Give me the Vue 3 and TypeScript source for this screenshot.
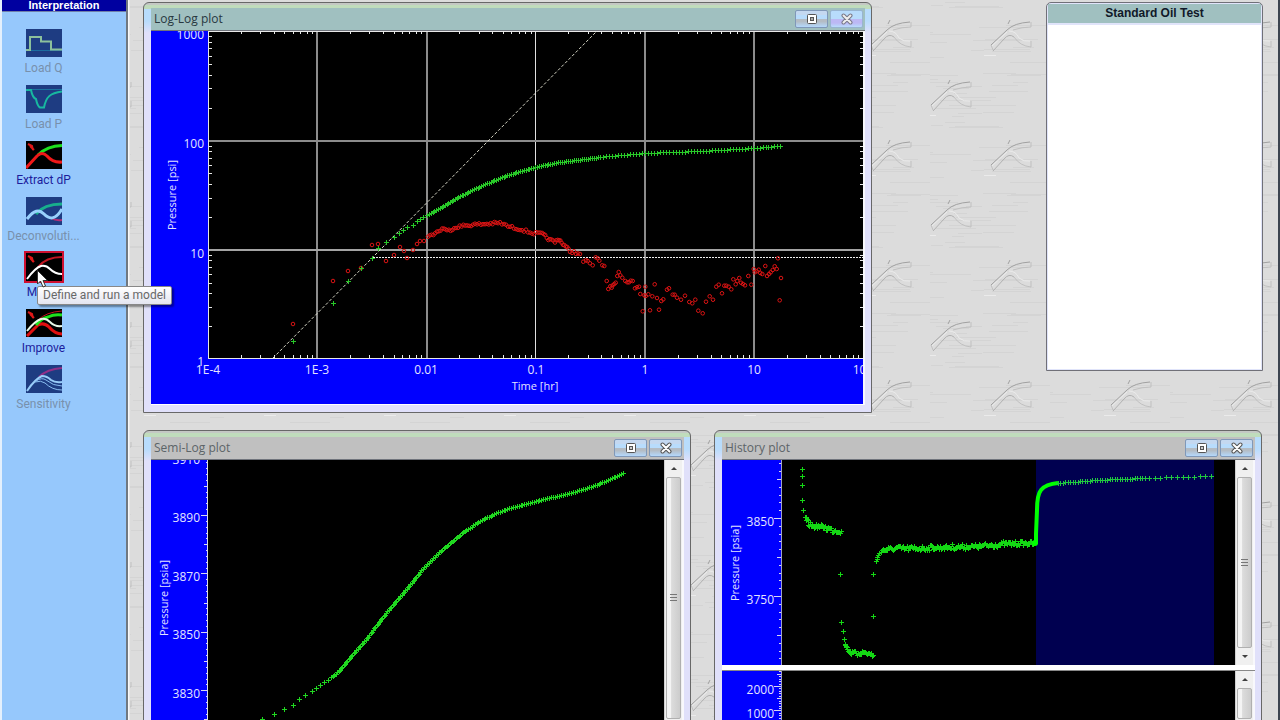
<script setup lang="ts">
type Pt = [number, number]

interface Tool {
  id: string
  label: string
  enabled: boolean
  active?: boolean
}

const tools: Tool[] = [
  { id: 'q', label: 'Load Q', enabled: false },
  { id: 'p', label: 'Load P', enabled: false },
  { id: 'dp', label: 'Extract dP', enabled: true },
  { id: 'dec', label: 'Deconvoluti...', enabled: false },
  { id: 'model', label: 'Model', enabled: true, active: true },
  { id: 'imp', label: 'Improve', enabled: true },
  { id: 'sens', label: 'Sensitivity', enabled: false },
]

let seed = 7
function rnd(): number {
  seed = (seed * 16807) % 2147483647
  return seed / 2147483647
}

/* Samples a polyline every `step` pixels, with optional vertical noise. */
function sample(line: Pt[], step: number, noise = 0): Pt[] {
  const out: Pt[] = []
  for (let i = 0; i < line.length - 1; i++) {
    const [x0, y0] = line[i]
    const [x1, y1] = line[i + 1]
    const n = Math.max(1, Math.round(Math.hypot(x1 - x0, y1 - y0) / step))
    for (let k = 0; k < n; k++) {
      const t = k / n
      out.push([x0 + (x1 - x0) * t, y0 + (y1 - y0) * t + (rnd() - 0.5) * 2 * noise])
    }
  }
  out.push(line[line.length - 1])
  return out
}

function plus(pts: Pt[]): string {
  return pts
    .map(([x, y]) => {
      const a = Math.round(x)
      const b = Math.round(y)
      return `M${a - 2} ${b + 0.5}h5M${a + 0.5} ${b - 2}v5`
    })
    .join('')
}

function rings(pts: Pt[]): string {
  return pts
    .map(([x, y]) => `M${(x - 1.8).toFixed(1)} ${y.toFixed(1)}a1.8 1.8 0 1 0 3.6 0a1.8 1.8 0 1 0 -3.6 0`)
    .join('')
}

/* ---- log-log plot ---- */
const decade = 109.2
const left = 57
const plotRight = 712
const bottom = 327

const gridX = [
  { x: 165, w: 2, c: '#8c8c8c' },
  { x: 275, w: 2, c: '#8c8c8c' },
  { x: 384, w: 1, c: '#e0e0e0' },
  { x: 493, w: 2, c: '#8c8c8c' },
  { x: 602, w: 2, c: '#8c8c8c' },
]
const gridY = [
  { y: 109, c: '#8c8c8c' },
  { y: 218, c: '#a4a4a4' },
]

function logTicks(): string {
  let d = ''
  for (let k = 0; k < 6; k++) {
    for (let m = 2; m < 10; m++) {
      const x = Math.round(left + (k + Math.log10(m)) * decade) + 0.5
      d += `M${x} 0v3M${x} ${bottom}v-3`
    }
  }
  for (let k = 0; k < 3; k++) {
    for (let m = 2; m < 10; m++) {
      const y = Math.round(bottom + 1 - (k + Math.log10(m)) * decade) + 0.5
      d += `M${left} ${y}h4M${plotRight} ${y}h-3`
    }
  }
  return d
}
const ticks = logTicks()

const greenEarly: Pt[] = [
  [142, 310], [182, 272], [197, 250], [210, 237], [221, 227], [227, 217], [235, 211], [243, 206],
  [248, 202], [252, 199], [256, 196], [262, 194], [266, 190], [269, 188], [272, 186],
]
const greenLate = [
  ...sample(
    [
      [276, 184], [289, 177], [304, 168], [319, 160], [334, 153], [349, 147], [369, 140], [384, 136],
      [409, 131], [449, 126],
    ],
    2,
  ),
  ...sample([[449, 126], [494, 122], [549, 120], [603, 117], [629, 115]], 3),
]
const logGreen = plus([...greenEarly, ...greenLate])

const redEarly: Pt[] = [
  [142, 293], [182, 250], [197, 240], [210, 237], [221, 214], [227, 213], [235, 230], [243, 224],
  [249, 216], [253, 220], [256, 227], [262, 219], [266, 213], [269, 210], [273, 210],
]
const redMid = sample(
  [
    [277, 206], [286, 201], [293, 197], [296, 200], [305, 196], [318, 194], [334, 193], [349, 192],
    [359, 196], [369, 198], [381, 202], [391, 203], [399, 209], [404, 211], [408, 208], [412, 213],
    [419, 220], [429, 223],
  ],
  2,
  1.4,
)
const redTail = (
  [
    [250, 185], [258, 181], [263, 183], [270, 190], [278, 196], [287, 172], [293, 175], [298, 182],
    [307, 196], [313, 198], [320, 243], [325, 267], [331, 259], [335, 263], [338, 256], [343, 252],
    [347, 248], [352, 228], [356, 216], [361, 226], [367, 233], [376, 243], [382, 247], [387, 247],
    [392, 242], [398, 243], [405, 265], [411, 262], [417, 260], [421, 282], [428, 334], [436, 260],
    [433, 286], [437, 288], [445, 283], [450, 331], [457, 289], [464, 253], [471, 294], [477, 329],
    [484, 303], [490, 298], [501, 269], [507, 265], [518, 284], [524, 284], [531, 293], [543, 299],
    [555, 287], [568, 306], [577, 310], [586, 299], [595, 332], [608, 340], [618, 305], [629, 289],
    [639, 299], [649, 260], [656, 254], [666, 280], [673, 257], [679, 257], [686, 260], [694, 268],
    [700, 238], [707, 253], [712, 243], [718, 234], [723, 248], [729, 252], [735, 256], [745, 228],
    [754, 254], [761, 207], [764, 217], [770, 214], [776, 209], [781, 219], [787, 222], [796, 198],
    [801, 228], [807, 222], [812, 217], [818, 210], [824, 199], [830, 207], [834, 175], [843, 234],
    [839, 301],
  ] as Pt[]
).map(([x, y]): Pt => [349 + x / 3, 169 + y / 3])
const logRed = rings([...redEarly, ...redMid, ...redTail])

const xLabels = ['1E-4', '1E-3', '0.01', '0.1', '1', '10', '100'].map((t, i) => ({
  t,
  x: Math.round(left + i * decade),
}))
const yLabels = [
  { t: '1000', y: 8 },
  { t: '100', y: 117 },
  { t: '10', y: 227 },
  { t: '1', y: 335 },
]

/* ---- linear axes ---- */
function linearTicks(x: number, first: number, minor: number, height: number, half: number): string {
  let d = ''
  for (let i = -20; i < 60; i++) {
    const y = Math.round(first + i * minor)
    if (y < 0 || y > height) continue
    const len = i % (half * 2) === 0 ? 7 : i % half === 0 ? 4 : 2
    d += `M${x} ${y + 0.5}h${-len}`
  }
  return d
}
const semiTicks = linearTicks(57, 55, 5.84, 260, 5)
const histTicks = linearTicks(59, 58, 7.8, 205, 5)
const rateTicks = linearTicks(59, 15, 2.44, 70, 5)

const semiLabels = [3910, 3890, 3870, 3850, 3830].map((v, i) => ({ v, y: Math.round(4 + i * 58.4) }))

const semiGreen = plus([
  ...([
    [111, 259], [123, 254], [133, 249], [142, 245], [148, 239], [154, 235], [161, 231], [165, 228],
    [169, 225], [173, 222], [177, 220],
  ] as Pt[]),
  ...sample(
    [
      [180, 217], [189, 210], [200, 196], [212, 183], [222, 170], [235, 153], [252, 133], [269, 112],
      [279, 101], [290, 91], [300, 82], [312, 72], [329, 61], [345, 53], [362, 47], [379, 43],
      [396, 38], [412, 35], [426, 31], [442, 26], [455, 21], [472, 13],
    ],
    2,
  ),
])

const histGreen = plus([
  ...([
    [80, 9], [80, 16], [80, 25], [80, 40], [81, 50], [118, 114], [119, 162], [121, 171], [122, 179],
    [151, 156], [151, 114],
  ] as Pt[]),
  ...sample([[83, 58], [87, 64], [91, 66], [98, 66], [105, 68], [111, 70], [119, 71]], 1, 2.5),
  ...sample([[123, 184], [126, 190], [130, 193], [135, 193], [142, 192], [151, 195]], 1, 2.5),
  ...sample([[154, 101], [156, 95], [160, 90]], 2, 0),
  ...sample([[160, 90], [167, 89], [175, 88], [195, 88], [221, 87], [254, 86], [278, 84], [295, 83], [312, 83]], 1, 2.5),
])
const histJump = 'M314 84V74L315 50Q315 35 319 30Q324 24 336 23'
const histFlat = plus([
  ...sample([[336, 23], [375, 20], [423, 18]], 2.5),
  ...sample([[427, 18], [455, 17], [489, 16]], 5.6),
])

/* ---- brushed metal strokes of the desktop tile ---- */
const streaks = Array.from({ length: 44 }, () => {
  const y = Math.floor(rnd() * 120) + 0.5
  return `M${Math.floor(rnd() * 110) - 20} ${y}h${Math.floor(rnd() * 40) + 12}`
}).join('')
</script>

<template>
  <div class="app">
    <aside class="side">
      <h2 class="side-title">Interpretation</h2>
      <nav class="tools">
        <button
          v-for="t in tools"
          :key="t.id"
          type="button"
          class="tool"
          :class="{ active: t.active }"
          :disabled="!t.enabled"
        >
          <svg class="tool-icon" viewBox="0 0 36 28" fill="none" stroke-width="2">
            <rect width="36" height="28" :fill="t.enabled ? '#000' : '#1e3c82'" />
            <template v-if="t.id === 'q'">
              <path d="M0 21.500H36" stroke="#1c6ca0" stroke-width="1" />
              <path d="M0 21H4V8H15V12.500H25V20.500H36" stroke="#8cc09c" />
            </template>
            <template v-else-if="t.id === 'p'">
              <path d="M0 4.500H36" stroke="#1c74a0" stroke-width="1" />
              <path d="M0 5H5C6 10 7 13 10 14C11 19 13 22 14 22.500H18C20 12 24 8 36 6.500" stroke="#18b8a0" />
            </template>
            <template v-else-if="t.id === 'dp'">
              <path d="M12 14Q21 5 36 4.500" stroke="#1ee01e" stroke-width="3" />
              <path d="M0 27L11 15Q16 10 21 15Q27 22 36 21" stroke="#f01818" stroke-width="3" />
            </template>
            <template v-else-if="t.id === 'dec'">
              <path d="M10 17Q18 7 36 7" stroke="#18b08c" stroke-width="3" />
              <path d="M25 21Q30 24 36 23" stroke="#b03078" />
              <path d="M1 22C8 13 13 12 18 17S29 24 36 12" stroke="#98d0fc" stroke-width="3" />
            </template>
            <template v-else-if="t.id === 'model'">
              <path d="M12 14Q20 4 36 4" stroke="#c01420" />
              <path d="M1 26Q9 15 15 13Q20 12 24 16Q29 21 36 21" stroke="#fff" />
            </template>
            <template v-else-if="t.id === 'imp'">
              <path d="M1 27L12 16Q18 13 23 18Q29 25 36 25" stroke="#e01010" stroke-width="3" />
              <path d="M10 16Q16 9 22 8Q28 5 36 6" stroke="#1ee01e" stroke-width="3" />
              <path d="M12 11Q20 3 36 2" stroke="#c01420" stroke-width="1" />
              <path d="M1 22Q9 12 15 10Q20 9 24 13Q29 18 36 17" stroke="#e8f8e8" />
            </template>
            <template v-else>
              <path d="M13 12Q21 4 36 3" stroke="#903088" />
              <path d="M1 26Q9 14 16 11Q21 11 25 15Q29 18 36 17" stroke="#98ccf8" />
              <path d="M10 16Q16 12 20 15Q27 21 36 21M9 17Q15 15 19 18Q26 25 36 25" stroke="#88bcf0" stroke-width="1" />
            </template>
            <path v-if="t.enabled" d="M2 3L6 5L7 9M4 5L8 9" stroke="#e01818" />
          </svg>
          <span class="tool-label">{{ t.label }}</span>
        </button>
      </nav>
    </aside>

    <main class="desktop">
      <svg class="texture" aria-hidden="true">
        <defs>
          <pattern id="metal" x="-40" y="-41" width="120" height="120" patternUnits="userSpaceOnUse">
            <rect width="120" height="120" fill="#dcdcdc" />
            <path :d="streaks" stroke="#d4d4d4" fill="none" />
            <g v-for="o in [0, 60]" :key="o" :transform="`translate(${o} ${o})`" fill="none">
              <path d="M20 1L18 5M1 26L17 11Q24 4 40 3" stroke="#a0a0a0" />
              <path d="M3 32L14 20Q19 14 24 18" stroke="#b0b0b0" />
              <path d="M41 3V8Q32 8 23 11M24 18Q30 27 41 28V22M1 26L3 31" stroke="#c0c0c0" />
              <path d="M19 12Q26 12 29 19Q34 23 40 22M2 27L17 13M-6 36.500H6" stroke="#ebebeb" />
            </g>
          </pattern>
        </defs>
        <rect width="100%" height="100%" fill="url(#metal)" />
      </svg>

      <section class="win win-log" aria-label="Log-Log plot">
        <header class="bar bar-active">
          <h3>Log-Log plot</h3>
          <button type="button" class="cap" aria-label="Maximize">
            <svg viewBox="0 0 12 12"><rect x="1.500" y="1.500" width="9" height="9" rx="1" fill="#fff" stroke="#555" /><rect x="4.500" y="4.500" width="3" height="3" fill="#aaa" stroke="#555" /></svg>
          </button>
          <button type="button" class="cap dim" aria-label="Close">
            <svg viewBox="0 0 12 12"><path d="M2.500 2.500L9.500 9.500M9.500 2.500L2.500 9.500" stroke="#778" stroke-width="4" stroke-linecap="round" /><path d="M2.500 2.500L9.500 9.500M9.500 2.500L2.500 9.500" stroke="#eee" stroke-width="2" stroke-linecap="round" /></svg>
          </button>
        </header>
        <div class="body body-log">
          <svg class="plot">
            <rect x="57" y="0" width="100%" height="327" fill="#000" />
            <g shape-rendering="crispEdges">
              <rect v-for="g in gridX" :key="g.x" :x="g.x" y="0" :width="g.w" height="327" :fill="g.c" />
              <rect v-for="g in gridY" :key="g.y" x="57" :y="g.y" width="655" height="2" :fill="g.c" />
              <path d="M57.500 0V327.500H712M57 0.500H712" stroke="#e8e8e8" fill="none" />
              <path :d="ticks" stroke="#e8e8e8" fill="none" />
            </g>
            <path d="M122 327L446 0" stroke="#d8d8c8" stroke-dasharray="3 2" fill="none" />
            <path d="M222 226.500H712" stroke="#f0f0f0" stroke-dasharray="2 1" fill="none" />
            <path :d="logRed" stroke="#dc1414" fill="none" />
            <path :d="logGreen" stroke="#28c828" fill="none" />
            <g class="axis">
              <text v-for="l in yLabels" :key="l.t" x="53" :y="l.y" text-anchor="end">{{ l.t }}</text>
              <text v-for="l in xLabels" :key="l.t" :x="l.x" y="343" text-anchor="middle">{{ l.t }}</text>
              <text class="name" x="384" y="359" text-anchor="middle">Time [hr]</text>
              <text class="name" transform="translate(25 164) rotate(-90)" text-anchor="middle">Pressure [psi]</text>
            </g>
          </svg>
        </div>
      </section>

      <section class="win win-semi" aria-label="Semi-Log plot">
        <header class="bar">
          <h3>Semi-Log plot</h3>
          <button type="button" class="cap" aria-label="Maximize">
            <svg viewBox="0 0 12 12"><rect x="1.500" y="1.500" width="9" height="9" rx="1" fill="#fff" stroke="#555" /><rect x="4.500" y="4.500" width="3" height="3" fill="#ccc" stroke="#555" /></svg>
          </button>
          <button type="button" class="cap" aria-label="Close">
            <svg viewBox="0 0 12 12"><path d="M2.500 2.500L9.500 9.500M9.500 2.500L2.500 9.500" stroke="#555" stroke-width="4" stroke-linecap="round" /><path d="M2.500 2.500L9.500 9.500M9.500 2.500L2.500 9.500" stroke="#fff" stroke-width="2" stroke-linecap="round" /></svg>
          </button>
        </header>
        <div class="body pane-semi">
          <svg class="plot">
            <rect x="57" y="0" width="100%" height="100%" fill="#000" />
            <path d="M56.500 0V280" stroke="#d8d8f0" shape-rendering="crispEdges" />
            <path :d="semiTicks" stroke="#d8d8f0" shape-rendering="crispEdges" />
            <path :d="semiGreen" stroke="#20d820" fill="none" />
            <g class="axis">
              <text v-for="l in semiLabels" :key="l.v" x="49" :y="l.y" text-anchor="end">{{ l.v }}</text>
              <text class="name" transform="translate(17 138) rotate(-90)" text-anchor="middle">Pressure [psia]</text>
            </g>
          </svg>
          <div class="scroll">
            <button type="button" class="arrow up" aria-label="Scroll up"></button>
            <div class="thumb"><i></i></div>
            <button type="button" class="arrow down" aria-label="Scroll down"></button>
          </div>
        </div>
      </section>

      <section class="win win-hist" aria-label="History plot">
        <header class="bar">
          <h3>History plot</h3>
          <button type="button" class="cap" aria-label="Maximize">
            <svg viewBox="0 0 12 12"><rect x="1.500" y="1.500" width="9" height="9" rx="1" fill="#fff" stroke="#555" /><rect x="4.500" y="4.500" width="3" height="3" fill="#ccc" stroke="#555" /></svg>
          </button>
          <button type="button" class="cap" aria-label="Close">
            <svg viewBox="0 0 12 12"><path d="M2.500 2.500L9.500 9.500M9.500 2.500L2.500 9.500" stroke="#555" stroke-width="4" stroke-linecap="round" /><path d="M2.500 2.500L9.500 9.500M9.500 2.500L2.500 9.500" stroke="#fff" stroke-width="2" stroke-linecap="round" /></svg>
          </button>
        </header>
        <div class="body pane-hist">
          <svg class="plot">
            <rect x="60" y="0" width="100%" height="100%" fill="#000" />
            <rect x="314" y="0" width="178" height="100%" fill="#000050" />
            <path d="M59.500 0V206" stroke="#a0a0c8" shape-rendering="crispEdges" />
            <path :d="histTicks" stroke="#d8d8f0" shape-rendering="crispEdges" />
            <path :d="histGreen" stroke="#14d814" fill="none" />
            <path :d="histJump" stroke="#00ff00" stroke-width="4" fill="none" />
            <circle cx="313" cy="83" r="3" fill="#00ff00" />
            <path :d="histFlat" stroke="#20c840" fill="none" />
            <g class="axis">
              <text x="52" y="66" text-anchor="end">3850</text>
              <text x="52" y="144" text-anchor="end">3750</text>
              <text class="name" transform="translate(17 103) rotate(-90)" text-anchor="middle">Pressure [psia]</text>
            </g>
          </svg>
          <div class="scroll">
            <button type="button" class="arrow up" aria-label="Scroll up"></button>
            <div class="thumb"><i></i></div>
            <button type="button" class="arrow down" aria-label="Scroll down"></button>
          </div>
        </div>
        <div class="splitter"></div>
        <div class="body pane-rate">
          <svg class="plot">
            <rect x="60" y="0" width="100%" height="100%" fill="#000" />
            <path d="M59.500 0V80" stroke="#a0a0c8" shape-rendering="crispEdges" />
            <path :d="rateTicks" stroke="#d8d8f0" shape-rendering="crispEdges" />
            <g class="axis">
              <text x="52" y="23" text-anchor="end">2000</text>
              <text x="52" y="47" text-anchor="end">1000</text>
            </g>
          </svg>
          <div class="scroll">
            <button type="button" class="arrow up" aria-label="Scroll up"></button>
            <div class="thumb"></div>
            <button type="button" class="arrow down" aria-label="Scroll down"></button>
          </div>
        </div>
      </section>

      <section class="note">
        <h3>Standard Oil Test</h3>
        <div class="note-body"></div>
      </section>
    </main>

    <div class="tooltip" role="tooltip">Define and run a model</div>
    <svg class="cursor" viewBox="0 0 12 19" aria-hidden="true">
      <path d="M0.500 0.500V14L3.500 11L6 17L8.500 16L6 10.500H10.500Z" fill="#fff" stroke="#333" />
    </svg>
  </div>
</template>

<style>
html,
body {
  margin: 0;
  overflow: hidden;
}
</style>

<style scoped>
.app {
  position: relative;
  display: flex;
  height: 100vh;
  overflow: hidden;
  background: #dcdcdc;
  font-family: 'Open Sans', 'Noto Sans', sans-serif;
  font-size: 12px;
}

h2,
h3 {
  margin: 0;
}

button {
  font: inherit;
  padding: 0;
  border: 0;
}

.side {
  flex: 0 0 124px;
  background: #96c8fc;
  border-left: 2px solid #e4f0fc;
  border-right: 2px solid #707880;
  box-shadow: 1px 0 0 #f8f8f8;
  z-index: 1;
}

.side-title {
  height: 11px;
  border-bottom: 1px solid #7080a8;
  background: #0000a0;
  color: #fff;
  font: bold 11px/11px 'Liberation Sans', sans-serif;
  text-align: center;
}

.tools {
  display: flex;
  flex-direction: column;
  width: 83px;
  padding-top: 14px;
}

.tool {
  display: flex;
  flex-direction: column;
  align-items: center;
  gap: 2px;
  height: 56px;
  padding-top: 3px;
  box-sizing: border-box;
  background: none;
  color: #1c1c9c;
  font-family: Roboto, 'Open Sans', sans-serif;
}

.tool:disabled {
  color: #7890ac;
}

.tool-icon {
  flex: none;
  width: 36px;
  height: 28px;
}

.tool.active .tool-icon {
  outline: 2px solid #d01030;
}

.tool-label {
  line-height: 18px;
  white-space: nowrap;
}

.desktop {
  position: relative;
  flex: 1;
  overflow: hidden;
  border-left: 2px solid #e8e8e8;
  border-right: 2px solid #3c4450;
}

.texture {
  position: absolute;
  width: 100%;
  height: 100%;
}

.win {
  position: absolute;
  display: flex;
  flex-direction: column;
  box-sizing: border-box;
  border: 1px solid #686868;
  border-radius: 6px 6px 0 0;
  padding: 6px 6px 7px 7px;
  background:
    linear-gradient(#c4c8c4 0 2px, #c0dcbc 2px 6px, transparent 6px),
    linear-gradient(#b8dcfc 0 18px, #e0e0fa 30px);
}

.win-log {
  left: 13px;
  top: 2px;
  width: 729px;
  padding-top: 5px;
}

.win-semi {
  left: 13px;
  top: 430px;
  width: 548px;
}

.win-hist {
  left: 584px;
  top: 430px;
  width: 548px;
}

.bar {
  display: flex;
  align-items: center;
  gap: 2px;
  height: 22px;
  padding: 0 2px 0 3px;
  border-bottom: 1px solid #70747c;
  background: #c0c0c0;
  color: #5c6468;
}

.bar-active {
  background: #a0c0c0;
  color: #283840;
}

.bar h3 {
  flex: 1;
  font-weight: normal;
  font-size: 12px;
  line-height: 20px;
}

.cap {
  display: flex;
  align-items: center;
  justify-content: center;
  width: 33px;
  height: 18px;
  box-sizing: border-box;
  border: 1px solid #8098b8;
  border-radius: 2px;
  background: linear-gradient(#c4d8f0 0 25%, #b8dcfc 25% 50%, #b4bcc4 50% 65%, #b4d8fc);
}

.cap.dim {
  border-color: #98b4d0;
  background: linear-gradient(#b8dcfc 50%, #bcb8f4 50% 75%, #b8dcfc);
}

.cap svg {
  width: 12px;
  height: 12px;
}

.body {
  display: flex;
  background: #0000ff;
  border-right: 2px solid #f8f8fc;
}

.body-log {
  height: 373px;
  border-bottom: 1px solid #fff;
}

.pane-semi {
  height: 276px;
}

.pane-hist {
  height: 205px;
}

.pane-rate {
  height: 65px;
}

.plot {
  flex: 1;
  min-width: 0;
  height: 100%;
}

.axis text {
  fill: #e4e4ff;
  font-size: 12px;
}

.axis .name {
  font-size: 11px;
}

.splitter {
  height: 5px;
  background: #fff;
  border-bottom: 1px solid #888;
}

.scroll {
  display: flex;
  flex-direction: column;
  align-items: center;
  flex: 0 0 17px;
  background: #f0f0f0;
  border-left: 1px solid #d0d0d0;
}

.arrow {
  flex: 0 0 17px;
  width: 17px;
  display: flex;
  align-items: center;
  justify-content: center;
  background: none;
}

.arrow::before {
  content: '';
  border: 3px solid transparent;
}

.arrow.up::before {
  border-top: 0;
  border-bottom-color: #404040;
}

.arrow.down::before {
  border-bottom: 0;
  border-top-color: #404040;
}

.thumb {
  flex: 1;
  display: flex;
  align-items: center;
  justify-content: center;
  width: 15px;
  box-sizing: border-box;
  border: 1px solid #b0b0b0;
  border-radius: 2px;
  background: linear-gradient(90deg, #f4f4f4 30%, #dcdcdc 35%, #cccccc);
}

.thumb i {
  width: 7px;
  height: 8px;
  background: repeating-linear-gradient(#777 0 1px, transparent 1px 3px);
}

.note {
  position: absolute;
  left: 916px;
  top: 2px;
  width: 217px;
  height: 369px;
  display: flex;
  flex-direction: column;
  box-sizing: border-box;
  border: 1px solid #707078;
  border-radius: 5px 5px 0 0;
  padding: 1px;
  background: #e0e4fa;
}

.note h3 {
  height: 19px;
  margin-bottom: 2px;
  background: #a0c0c0;
  color: #101828;
  font: bold 12px/19px 'Liberation Sans', sans-serif;
  text-align: center;
}

.note-body {
  flex: 1;
  background: #fff;
}

.tooltip {
  position: absolute;
  left: 37px;
  top: 286px;
  z-index: 2;
  padding: 0 5px;
  border: 1px solid #888;
  border-radius: 2px;
  background: linear-gradient(#fff, #e4e5f0);
  box-shadow: 2px 2px 2px rgba(0, 0, 0, 0.4);
  color: #686868;
  font-family: Roboto, 'Open Sans', sans-serif;
  line-height: 17px;
  white-space: nowrap;
}

.cursor {
  position: absolute;
  left: 37px;
  top: 270px;
  z-index: 3;
  width: 12px;
  height: 19px;
}
</style>
